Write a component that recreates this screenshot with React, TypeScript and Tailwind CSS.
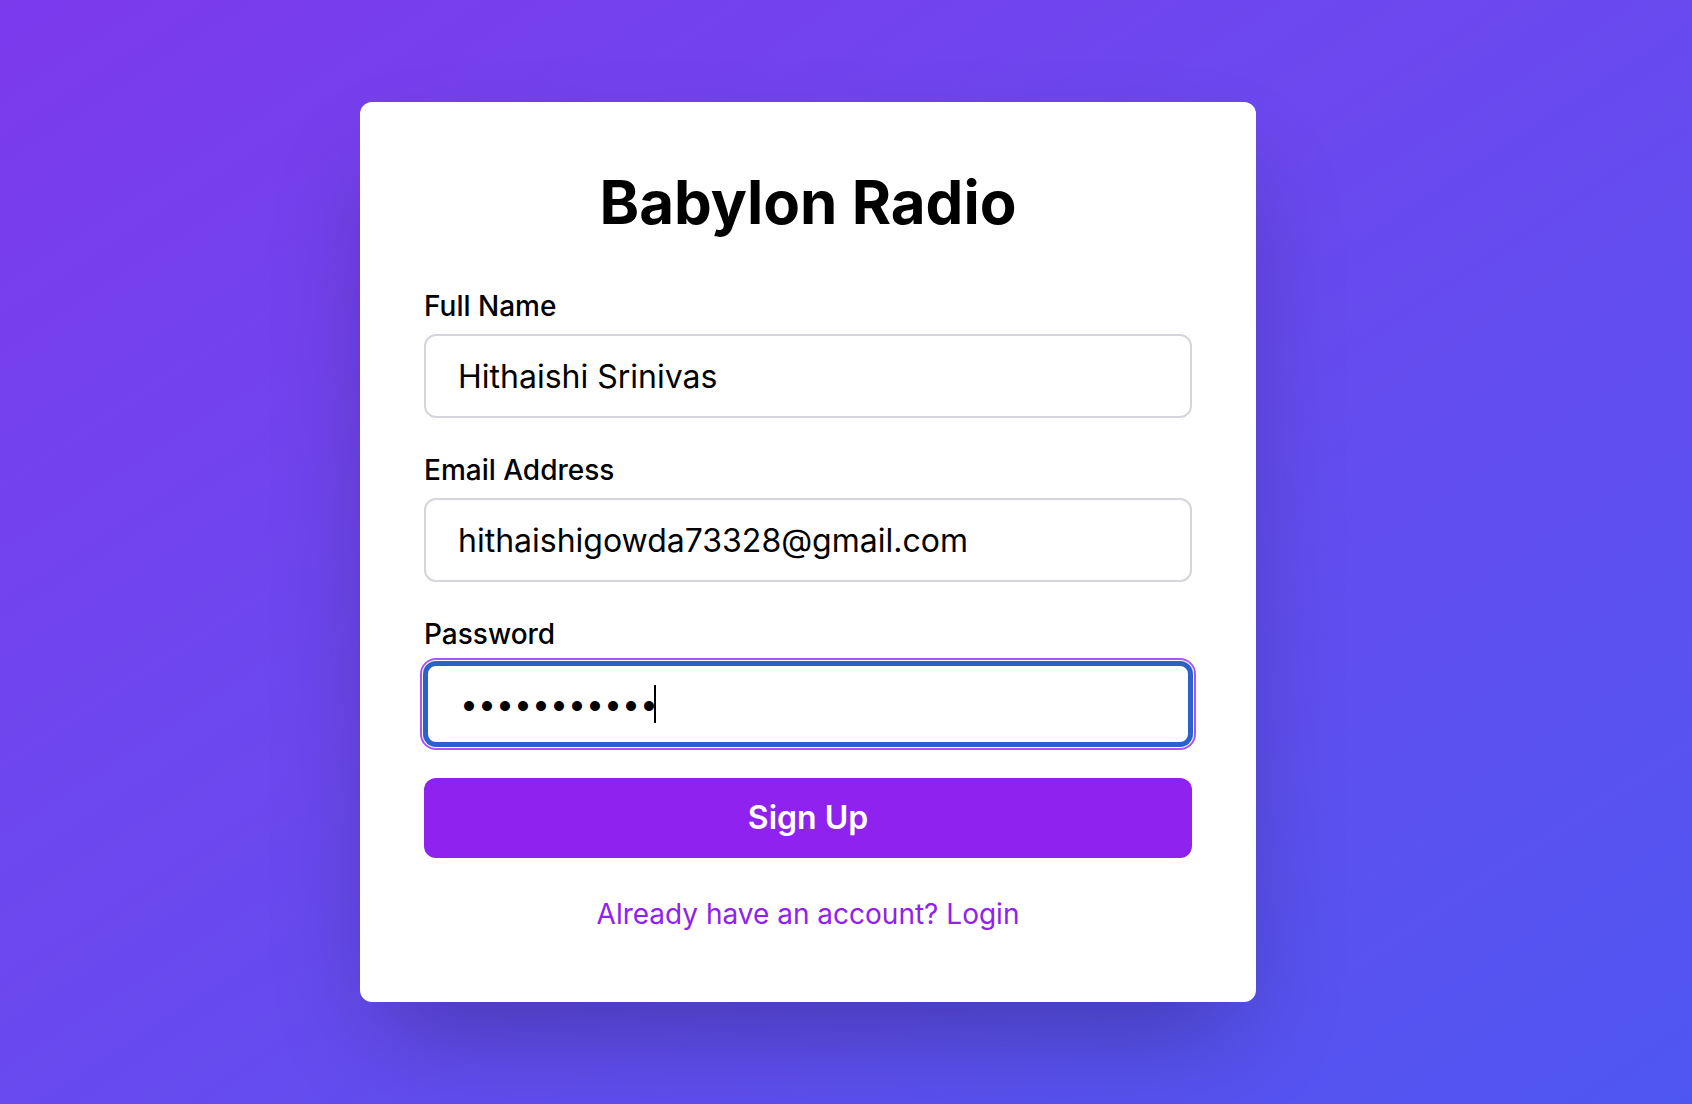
export default function App() {
  return (
    <div className="min-h-screen w-full flex items-center justify-start pl-[360px] bg-linear-to-br from-[#7c3aed] to-[#4e56f1] font-['Inter',sans-serif]">
      <div className="w-[896px] bg-white rounded-[12px] px-16 pt-16 pb-16 shadow-[0_50px_100px_-24px_rgba(0,0,0,0.28)]">
        <h1 className="text-center text-[60px] leading-[72px] font-bold text-black mb-12">Babylon Radio</h1>

        <div className="mb-8">
          <label className="block text-[28px] leading-[40px] font-medium text-black mb-2">Full Name</label>
          <input
            readOnly
            value="Hithaishi Srinivas"
            className="block w-full h-[84px] border-2 border-[#d4d6dc] rounded-[12px] px-8 text-[32px] leading-[48px] text-black outline-none bg-white"
          />
        </div>

        <div className="mb-8">
          <label className="block text-[28px] leading-[40px] font-medium text-black mb-2">Email Address</label>
          <input
            readOnly
            value="hithaishigowda73328@gmail.com"
            className="block w-full h-[84px] border-2 border-[#d4d6dc] rounded-[12px] px-8 text-[32px] leading-[48px] text-black outline-none bg-white"
          />
        </div>

        <div className="mb-8">
          <label className="block text-[28px] leading-[40px] font-medium text-black mb-2">Password</label>
          <div className="flex items-center w-full h-[84px] border-4 border-[#2b62c9] rounded-[12px] pl-8 bg-white shadow-[0_0_0_1px_#2b62c9,0_0_0_2px_#ffffff,0_0_0_4px_#a855f7]">
            <span className="text-[32px] leading-[48px] text-black tracking-[0px]">•••••••••••</span>
            <span className="w-[2px] h-[38px] bg-black ml-[-4px]"></span>
          </div>
        </div>

        <button className="block w-full h-[80px] rounded-[12px] bg-[#9022ef] text-white text-[32px] leading-[48px] font-semibold">
          Sign Up
        </button>

        <p className="mt-8 text-center text-[28px] leading-[48px] text-[#9022ef]">
          Already have an account? Login
        </p>
      </div>
    </div>
  );
}
